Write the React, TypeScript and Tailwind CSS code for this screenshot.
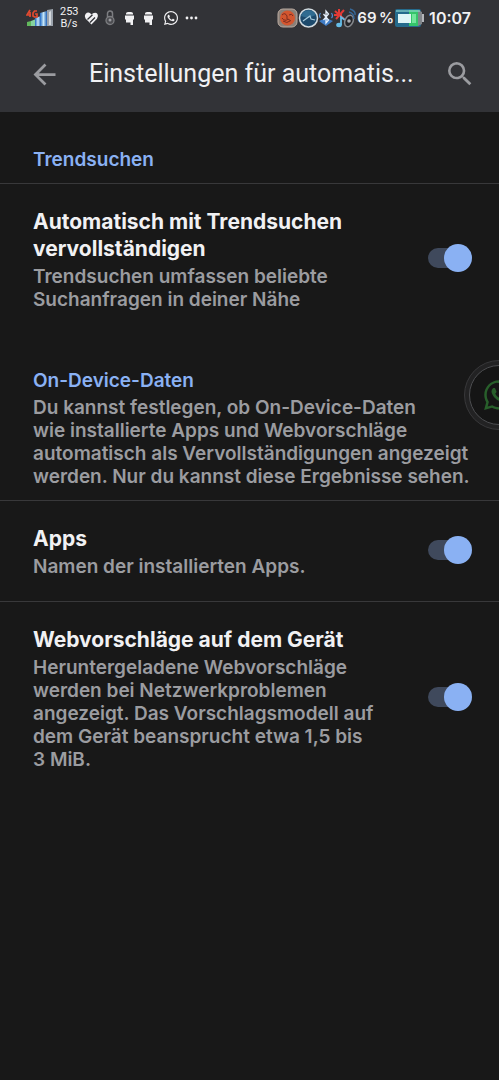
import { useState } from "react"
import { FaWhatsapp } from "react-icons/fa"
import { MdArrowBack, MdSearch } from "react-icons/md"

function SignalIcon() {
    return (
        <svg width="28" height="20" viewBox="0 0 28 20" aria-hidden="true">
            <defs>
                <linearGradient id="bar" x1="0" x2="1" y1="0" y2="0">
                    <stop offset="0" stopColor="#1f68c4" />
                    <stop offset="0.5" stopColor="#c6e6f6" />
                    <stop offset="1" stopColor="#1f5fb4" />
                </linearGradient>
            </defs>
            <path d="M1 14l4-1v5H1z" fill="#62b85c" />
            <path d="M5 13l5-2v7H5z" fill="#86d3a0" />
            <path d="M9 10l6-2v10H9z" fill="url(#bar)" />
            <path d="M14 5l7-2v15h-7z" fill="url(#bar)" />
            <path d="M21 2l6-1v17h-6z" fill="#9ba3ac" />
            <path d="M23 4l2-1v14h-2z" fill="#d4d9de" />
            <path d="M4 2L1 7h4M4 4v5M11 3H8.500L7 5v3l1.500 1H11V6H9" fill="none" stroke="#e04a30" strokeWidth="1.700" />
        </svg>
    )
}

function HeartIcon() {
    return (
        <svg width="15" height="15" viewBox="0 0 15 15" aria-hidden="true">
            <path d="M7.500 13.500L1.500 7.500Q0 5 1.500 3 4 .5 6.500 2.500L7.500 3.500 9 2.200Q12 .8 13.500 3q1.300 2.500-.5 4.800z" fill="#f1f1f3" />
            <path d="M3.500 8.500L8.500 3.800M6 11.500L11 6.500" stroke="#323337" strokeWidth="1.300" />
        </svg>
    )
}

function LockIcon() {
    return (
        <svg width="10" height="16" viewBox="0 0 10 16" aria-hidden="true">
            <path d="M2.500 7V3.500a2.500 2.500 0 0 1 5 0V7" fill="none" stroke="#7c7d81" strokeWidth="1.500" />
            <circle cx="5" cy="10.500" r="4" fill="#4c4d51" stroke="#7c7d81" strokeWidth="1.300" />
            <circle cx="5" cy="10" r="1.500" fill="#9b9ca0" />
        </svg>
    )
}

function AndroidIcon() {
    return (
        <svg width="9" height="14" viewBox="0 0 9 14" aria-hidden="true">
            <path d="M1 3.500V2.500Q1 1 3 1h3q2 0 2 1.500v1zM0 4.500h9v4H8V14H5.500v-2.500H1v-3H0z" fill="#f1f1f3" />
        </svg>
    )
}

function TrayIcons() {
    return (
        <svg width="80" height="22" viewBox="0 0 80 22" aria-hidden="true">
            {/* orange face */}
            <rect x="1" y="2" width="19" height="18" rx="5" fill="#8b8078" stroke="#b9aaa0" />
            <circle cx="10.500" cy="11" r="7.500" fill="#d3562f" />
            <path d="M5 8q3-3 5 1v3M12 8q3-2 4 1M5 11q3 4 6 1l3 2M6 14q4 3 7 0" fill="none" stroke="#7a2c20" strokeWidth="1" />
            {/* compass */}
            <circle cx="31.500" cy="11" r="9" fill="#1d4a6c" stroke="#d2dbe0" strokeWidth="1.500" />
            <path d="M24 9a8 8 0 0 1 15-1l-8 3z" fill="#2f6b90" />
            <path d="M26 14l7-5 1 3 4 1" fill="none" stroke="#a8cbdc" strokeWidth="1.200" />
            {/* bluetooth */}
            <path d="M42 14l7-3 7 3-7 5z" fill="#3f7cc4" />
            <path d="M46.500 7l5 6-2.500 3V4l2.500 3-5 6" fill="none" stroke="#e5effb" strokeWidth="1.300" />
            <path d="M43.500 6q-2 3 0 5M54.500 6q2 3 0 5" fill="none" stroke="#4c8cd4" strokeWidth="1.200" />
            {/* note and speaker */}
            <path d="M58 4l9 8M67 3l-8 9M57 8h8M62 2v7" stroke="#e23a35" strokeWidth="2" />
            <path d="M64 18V10l4 3" fill="none" stroke="#65bde8" strokeWidth="1.800" />
            <ellipse cx="62" cy="18" rx="2.800" ry="2.200" fill="#65bde8" />
            <ellipse cx="72" cy="14" rx="4" ry="6" transform="rotate(25 72 14)" fill="#242529" stroke="#85888d" strokeWidth="1.500" />
            <circle cx="72" cy="14" r="1.800" fill="#aaadb2" />
            <path d="M72 5q5 1 5 7M73 2q6 2 5 6" fill="none" stroke="#366796" strokeWidth="1.500" />
        </svg>
    )
}

function BatteryIcon() {
    return (
        <svg width="31" height="20" viewBox="0 0 31 20" aria-hidden="true">
            <rect x="1" y="1" width="26" height="18" rx="2" fill="#256b8c" />
            <path d="M15 2h9v16h-9z" fill="#35c46b" />
            <path d="M24 2l4 2v12l-4 2z" fill="#80858a" />
            <path d="M28 6h2v8h-2z" fill="#b3b6ba" />
            <path d="M2 3h24" stroke="#8ed8cf" strokeWidth="1.200" />
            <rect x="4" y="6" width="13" height="9" fill="#dff5f6" />
            <path d="M18 6h4v9h-4z" fill="#72e69c" />
        </svg>
    )
}

function StatusBar() {
    return (
        <div className="flex h-9 items-center justify-between pl-[26px] pr-7 text-[#f1f1f3]">
            <div className="flex items-center gap-1.5">
                <SignalIcon />
                <div className="w-[18px] text-center font-[Roboto] text-[11px] leading-3">
                    <p>253</p>
                    <p>B/s</p>
                </div>
                <HeartIcon />
                <LockIcon />
                <div className="flex items-center gap-2.5 pl-1">
                    <AndroidIcon />
                    <AndroidIcon />
                    <FaWhatsapp size={16} />
                </div>
                <svg width="13" height="4" viewBox="0 0 13 4" fill="#f1f1f3" aria-hidden="true">
                    <circle cx="2" cy="2" r="1.400" />
                    <circle cx="6.500" cy="2" r="1.400" />
                    <circle cx="11" cy="2" r="1.400" />
                </svg>
            </div>
            <div className="flex items-center font-semibold">
                <TrayIcons />
                <span className="whitespace-nowrap text-[15px]">{"69\u2009%"}</span>
                <BatteryIcon />
                <span className="pl-1 text-base">10:07</span>
            </div>
        </div>
    )
}

interface SettingProps {
    id: string
    title: string
    description: string
}

function Setting({ id, title, description }: SettingProps) {
    const [enabled, setEnabled] = useState(true)
    return (
        <div className="flex items-center justify-between gap-8 pb-[23px] pl-[33px] pr-[27px] pt-6">
            <label htmlFor={id} className="flex flex-1 flex-col gap-[3px]">
                <span className="text-[21px] font-bold leading-[27px] text-[#f1f1f3]">{title}</span>
                <span className="text-[19px] font-semibold leading-[23px] text-[#9b9ca0]">{description}</span>
            </label>
            <input
                id={id}
                type="checkbox"
                role="switch"
                checked={enabled}
                onChange={(e) => setEnabled(e.target.checked)}
                className="relative mb-1 h-7 w-11 shrink-0 cursor-pointer appearance-none before:absolute before:left-0 before:top-1 before:h-5 before:w-10 before:rounded-full before:bg-[#3f495c] after:absolute after:left-0 after:top-0 after:size-7 after:rounded-full after:bg-[#9b9ca0] checked:after:left-4 checked:after:bg-[#8ab1f3]"
            />
        </div>
    )
}

export default function App() {
    return (
        <div className="relative min-h-screen overflow-hidden bg-[#181818] font-[Inter,sans-serif]">
            <header className="bg-[#323337]">
                <StatusBar />
                <div className="flex h-[76px] items-center pl-7 pr-[23px]">
                    <button type="button" aria-label="Zurück" className="text-[#9b9ca0]">
                        <MdArrowBack size={33} />
                    </button>
                    <h1 className="ml-7 flex-1 whitespace-nowrap font-[Roboto,sans-serif] text-[25px] text-[#f1f1f3]">Einstellungen für automatis...</h1>
                    <button type="button" aria-label="Suchen" className="text-[#9b9ca0]">
                        <MdSearch size={32} />
                    </button>
                </div>
            </header>
            <main>
                <section>
                    <h2 className="border-b border-[#38383a] px-[33px] pb-2.5 pt-[34px] text-[19px] font-semibold leading-[27px] text-[#8ab1f3]">Trendsuchen</h2>
                    <Setting
                        id="trends"
                        title="Automatisch mit Trendsuchen vervollständigen"
                        description="Trendsuchen umfassen beliebte Suchanfragen in deiner Nähe"
                    />
                </section>
                <section className="divide-y divide-[#38383a]">
                    <div className="pb-3 pl-[33px] pr-[27px] pt-[33px]">
                        <h2 className="text-[19px] font-semibold leading-[27px] text-[#8ab1f3]">On-Device-Daten</h2>
                        <p className="mt-0.5 text-[19px] font-semibold leading-[23px] text-[#9b9ca0]">
                            Du kannst festlegen, ob On-Device-Daten
                            <br />
                            wie installierte Apps und Webvorschläge automatisch als Vervollständigungen angezeigt werden. Nur du kannst diese Ergebnisse sehen.
                        </p>
                    </div>
                    <Setting id="apps" title="Apps" description="Namen der installierten Apps." />
                    <Setting
                        id="web"
                        title="Webvorschläge auf dem Gerät"
                        description={"Heruntergeladene Webvorschläge werden bei Netzwerkproblemen angezeigt. Das Vorschlagsmodell auf dem Gerät beansprucht etwa 1,5 bis 3\u00a0MiB."}
                    />
                </section>
            </main>
            <button
                type="button"
                aria-label="WhatsApp"
                className="absolute -right-[35px] top-[360px] flex size-[70px] items-center justify-center rounded-full border border-[#38383a] bg-[#222223]"
            >
                <span className="flex size-[60px] items-center justify-center rounded-full border border-[#4c4d50] bg-[#151515]">
                    <FaWhatsapp size={34} className="text-[#285f2b]" />
                </span>
            </button>
        </div>
    )
}
